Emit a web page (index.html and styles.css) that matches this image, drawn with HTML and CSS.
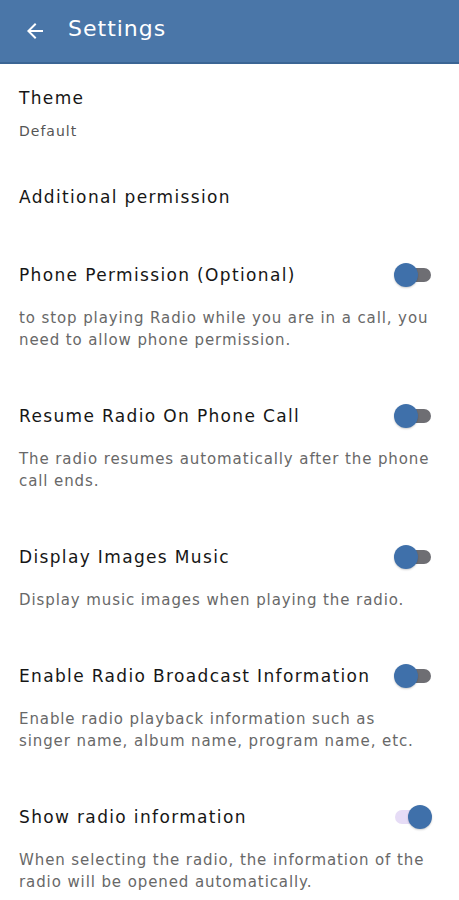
FILE: index.html
```html
<!DOCTYPE html>
<html>
<head>
    <title>Settings</title>
    <link rel="stylesheet" href="styles.css">
</head>
<body>

    <header class="app-bar">
        <svg class="back" width="24" height="24" viewBox="0 0 24 24">
            <path d="M20 11H7.83l5.59-5.59L12 4l-8 8 8 8 1.41-1.41L7.83 13H20v-2z" fill="#fff"/>
        </svg>
        <h1 class="app-title">Settings</h1>
    </header>

    <div class="pref pref-theme">
        <div class="pref-title">Theme</div>
        <div class="pref-summary">Default</div>
    </div>

    <div class="category">Additional permission</div>

    <div class="pref">
        <div class="pref-row">
            <div class="pref-title">Phone Permission (Optional)</div>
            <span class="switch"></span>
        </div>
        <div class="pref-desc">to stop playing Radio while you are in a call, you need to allow phone permission.</div>
    </div>

    <div class="pref">
        <div class="pref-row">
            <div class="pref-title">Resume Radio On Phone Call</div>
            <span class="switch"></span>
        </div>
        <div class="pref-desc">The radio resumes automatically after the phone call ends.</div>
    </div>

    <div class="pref">
        <div class="pref-row">
            <div class="pref-title">Display Images Music</div>
            <span class="switch"></span>
        </div>
        <div class="pref-desc">Display music images when playing the radio.</div>
    </div>

    <div class="pref">
        <div class="pref-row">
            <div class="pref-title">Enable Radio Broadcast Information</div>
            <span class="switch"></span>
        </div>
        <div class="pref-desc">Enable radio playback information such as singer name, album name, program name, etc.</div>
    </div>

    <div class="pref">
        <div class="pref-row">
            <div class="pref-title">Show radio information</div>
            <span class="switch on"></span>
        </div>
        <div class="pref-desc">When selecting the radio, the information of the radio will be opened automatically.</div>
    </div>

</body>
</html>
```

FILE: styles.css
```css
body {
    margin: 0;
    font-family: "DejaVu Sans", "Noto Sans", sans-serif;
    background: #fff;
    color: #161616;
}
.app-bar {
    height: 64px;
    background: #4a76a8;
    border-bottom: 2px solid #3b6594;
    display: flex;
    align-items: center;
    padding-left: 23px;
    box-sizing: border-box;
}
.back {
    margin-right: 21px;
}
.app-title {
    margin: 0;
    color: #fff;
    font-size: 22px;
    font-weight: 400;
    letter-spacing: 1px;
    padding-bottom: 6px;
}
.pref {
    padding: 20px 28px 25px 19px;
}
.pref-theme {
    padding-top: 22px;
    padding-bottom: 22px;
}
.pref-title {
    font-size: 17px;
    line-height: 24px;
    letter-spacing: 1.35px;
}
.pref-summary {
    margin-top: 11px;
    font-size: 14px;
    line-height: 20px;
    letter-spacing: 1px;
    color: #555;
}
.category {
    font-size: 17px;
    line-height: 24px;
    letter-spacing: 1.35px;
    padding: 22px 19px 26px;
}
.pref-row {
    height: 40px;
    display: flex;
    align-items: center;
    justify-content: space-between;
}
.pref-desc {
    margin-top: 12px;
    margin-right: 1px;
    font-size: 15px;
    line-height: 22px;
    letter-spacing: 0.9px;
    color: #686868;
}
.switch {
    position: relative;
    width: 36px;
    height: 14px;
    border-radius: 7px;
    background: #6e6e73;
    flex-shrink: 0;
}
.switch::after {
    content: "";
    position: absolute;
    left: -1px;
    top: -5px;
    width: 24px;
    height: 24px;
    border-radius: 50%;
    background: #3f70aa;
    box-shadow: 0 1px 2px rgba(0, 0, 0, 0.2);
}
.switch.on {
    background: #e6dcf6;
}
.switch.on::after {
    left: auto;
    right: -1px;
}
```
